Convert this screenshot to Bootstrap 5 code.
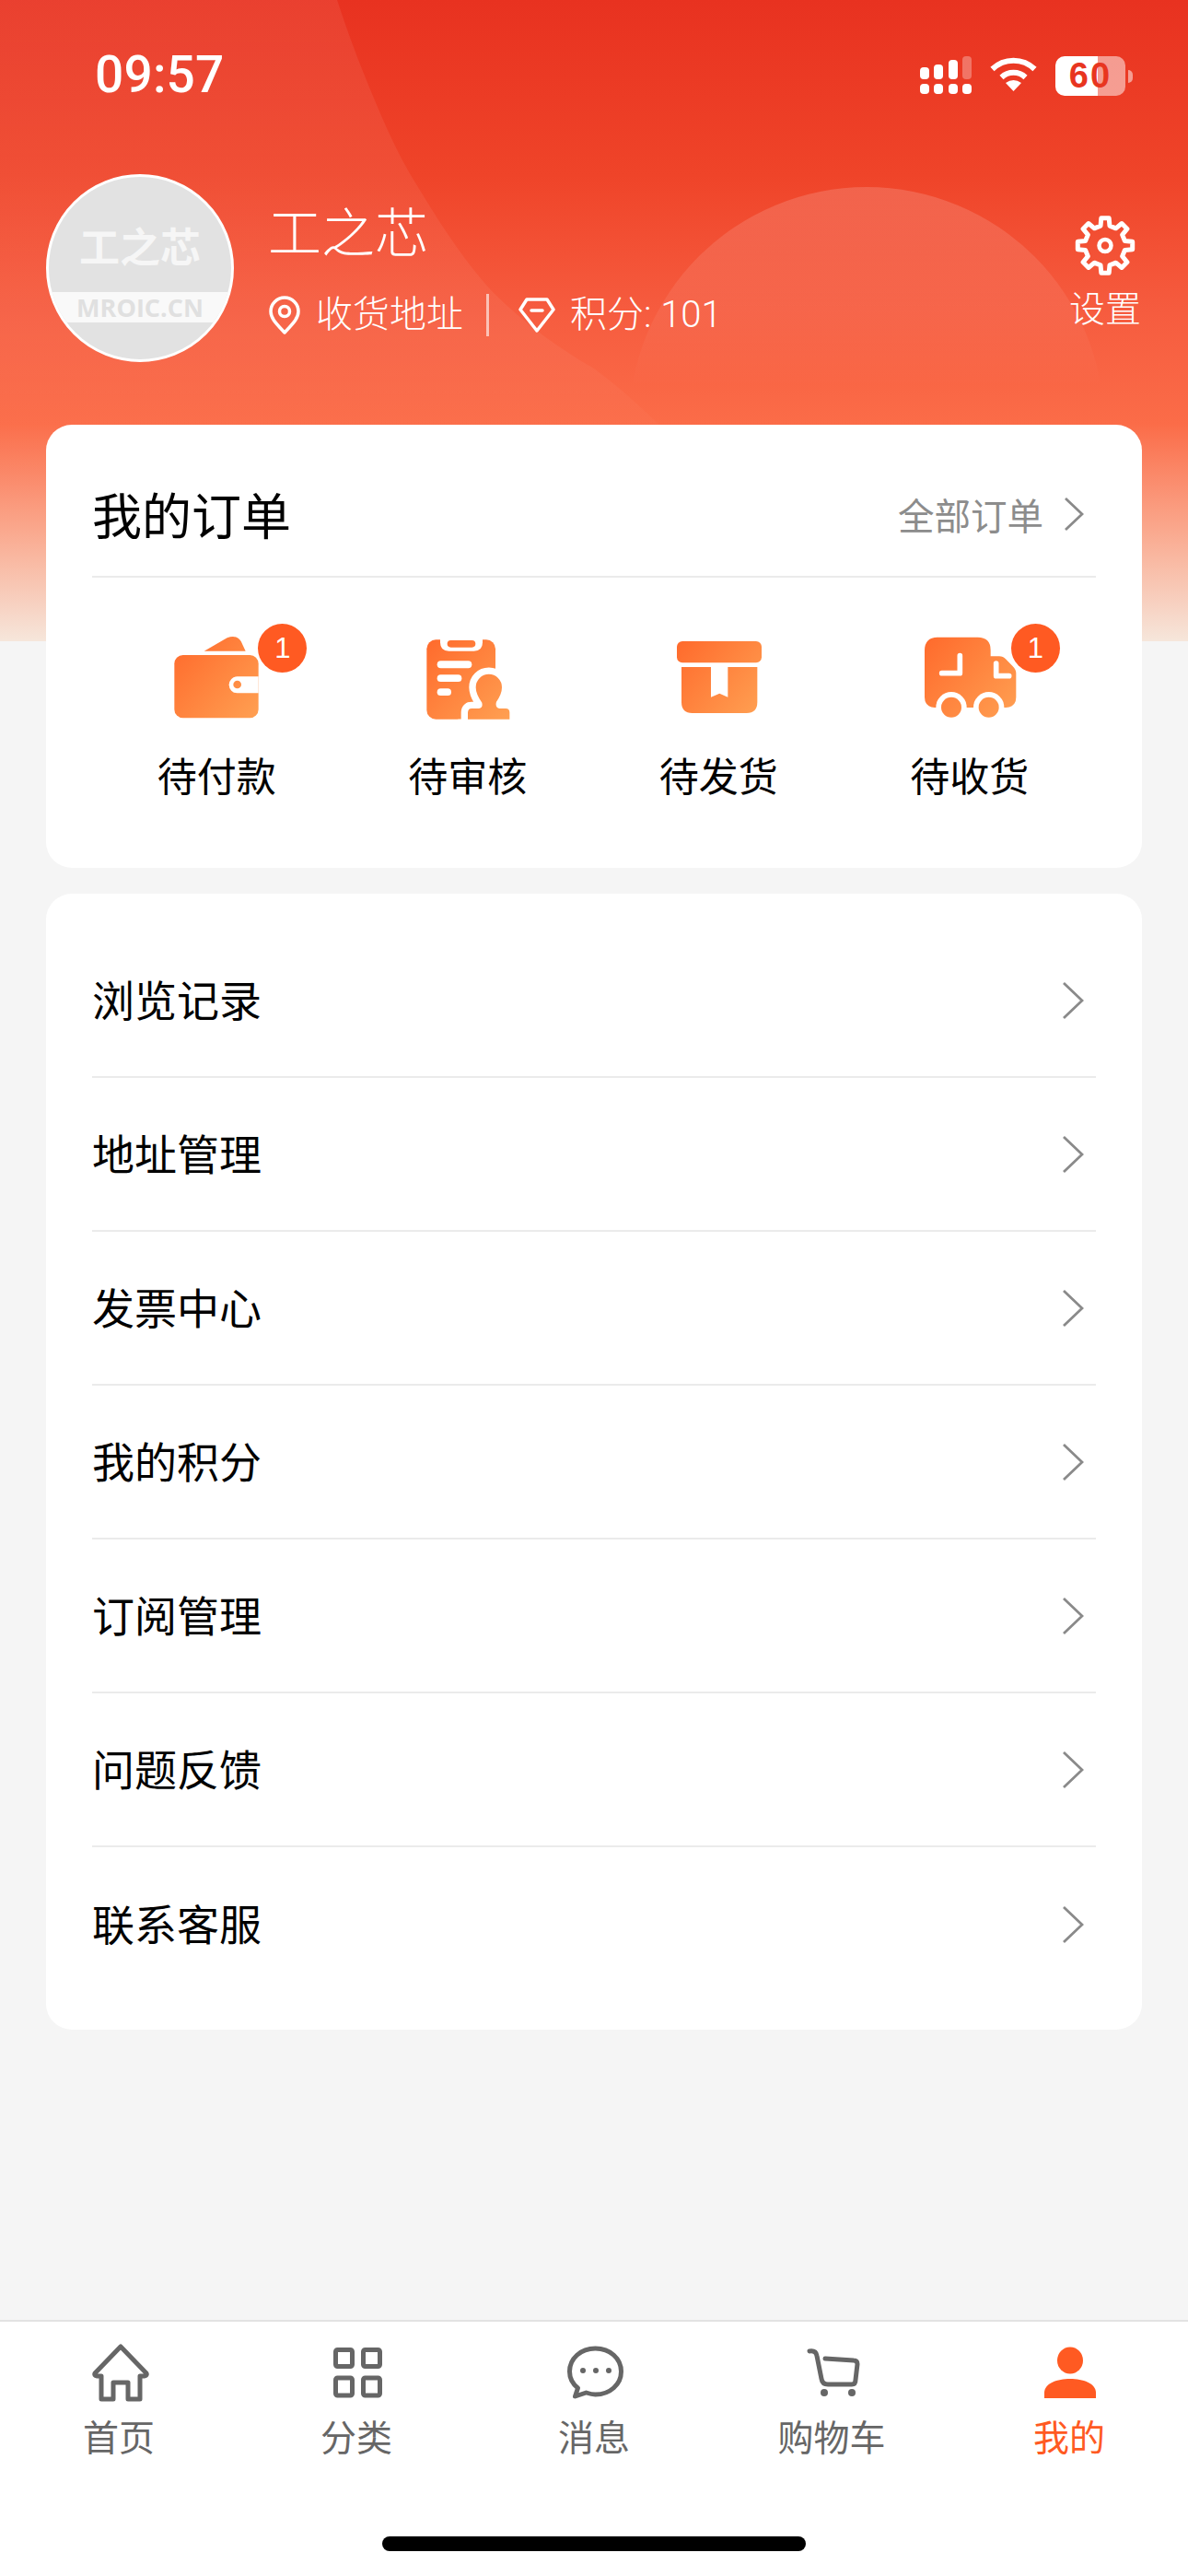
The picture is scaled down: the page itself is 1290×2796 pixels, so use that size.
<!DOCTYPE html>
<html lang="zh-CN">
<head>
<meta charset="utf-8">
<title>我的</title>
<link href="https://cdn.jsdelivr.net/npm/bootstrap@5.3.0/dist/css/bootstrap.min.css" rel="stylesheet">
<style>
html,body{margin:0;background:#f5f5f5}
body{font-family:"Noto Sans CJK SC","Liberation Sans",sans-serif;color:#000}
.screen{width:1290px;height:2796px;position:relative;overflow:hidden;background:#f5f5f5}
.hero-bg{position:absolute;left:0;top:0;width:1290px;height:696px;background:linear-gradient(180deg,#e83220 0,#ef4429 190px,#f65c3f 340px,#fb6c48 460px,#faa78c 573px,#f6e6db 696px)}
.hero-art{position:absolute;left:0;top:0}
.status-row{position:relative;height:105px;padding:60px 68px 0 103px}
.clock{font-family:Roboto,"Liberation Sans",sans-serif;font-weight:500;font-size:55px;line-height:43px;color:#fff;letter-spacing:.2px}
.status-icons{gap:19px;margin-top:1px}
.batt{position:relative;width:76px;height:43px;border-radius:10px;background:linear-gradient(90deg,#fff 0,#fff 46px,rgba(255,255,255,.5) 46px);font-family:"Liberation Sans",sans-serif;font-weight:700;font-size:38px;letter-spacing:2px;line-height:43px;text-align:center;color:#e8351f}
.batt::after{content:"";position:absolute;left:79px;top:15px;width:5px;height:14px;border-radius:0 5px 5px 0;background:rgba(255,255,255,.5)}
.profile{position:relative;margin:84px 52px 0 50px;height:204px;color:#fff}
.avatar-disc{width:204px;height:204px;border:3px solid #fff;background:#e2e2e2;flex:none;overflow:hidden;position:relative}
.avatar-big{font-weight:700;font-size:44px;line-height:50px;color:#f6f6f6;text-align:center;margin-top:49px}
.avatar-band{position:absolute;left:0;right:0;top:125px;height:33px;background:#f9f9f9;text-align:center;font-family:"Open Sans",sans-serif;font-weight:700;font-size:27px;line-height:33px;color:#e0e0e0}
.info{margin-left:37px;padding-top:25px}
.who{font-size:58px;line-height:70px;font-weight:300}
.meta{font-family:Roboto,"Noto Sans CJK SC",sans-serif;font-size:40px;line-height:46px;margin-top:35px;font-weight:300;color:#fff}
.pipe{width:3px;height:46px;background:rgba(255,255,255,.6);margin:0 32px 0 25px}
.setup{padding-top:44px;width:76px}
.setup span{font-size:39px;line-height:44px;margin-top:10px;white-space:nowrap;font-weight:300}
.panel.card{position:relative;border:0;border-radius:28px;margin-left:50px;margin-right:50px;background:#fff}
.panel.orders{margin-top:68px;height:481px;padding:0 50px}
.orders-head{height:166px;border-bottom:2px solid #ebebeb;padding-top:30px}
.orders-title{font-size:54px;line-height:70px}
.orders-all{font-size:39.500px;line-height:60px;color:#8c8c8c;padding-right:13px}
.orders-all svg{margin-left:22px}
.order-slot{flex:1 1 0;padding-top:61px}
.order-icon{position:relative;width:120px;height:96px}
.order-icon svg{display:block}
.dot-count{position:absolute;top:-11px;left:104px;width:53px;height:53px;background:#ff5a22;color:#fff;font-family:"Liberation Sans",sans-serif;font-size:31px;line-height:53px;text-align:center}
.order-name{font-size:43px;line-height:60px;margin-top:26px;margin-right:2px}
.panel.menu-list{margin-top:28px;height:1233px;padding:33px 50px}
.menu-list .list-group-item{height:167px;padding:0;border:0;border-bottom:2px solid #ebebeb;background:transparent;color:#000;font-size:46px}
.menu-list .list-group-item:last-child{border-bottom:0}
.menu-list svg{margin-right:13px}
.row-label{margin-bottom:5px}
.tabs{position:absolute;left:0;right:0;bottom:0;height:278px;background:#fff;border-top:2px solid #e3e3e3}
.tab-cell{flex:1 1 0;padding-top:24px;color:#666}
.tab-cell svg{display:block}
.tab-cell span{font-size:39px;line-height:38px;margin-top:17px;font-weight:400}
.tab-cell.on{color:#ff5a22}
.home-bar{position:absolute;left:415px;top:233px;width:460px;height:16px;border-radius:8px;background:#000}
.ink{fill:none;stroke:#666;stroke-width:5;stroke-linejoin:round;stroke-linecap:round}
</style>
</head>
<body>
<div class="screen">
  <div class="hero-bg">
    <svg class="hero-art" width="1290" height="696" viewBox="0 0 1290 696">
      <defs>
        <linearGradient id="sun" x1="0" y1="203" x2="0" y2="420" gradientUnits="userSpaceOnUse">
          <stop offset="0" stop-color="#fff" stop-opacity=".16"/>
          <stop offset="1" stop-color="#fff" stop-opacity="0"/>
        </linearGradient>
        <linearGradient id="veil" x1="0" y1="0" x2="0" y2="520" gradientUnits="userSpaceOnUse">
          <stop offset="0" stop-color="#fff" stop-opacity=".07"/>
          <stop offset=".7" stop-color="#fff" stop-opacity=".05"/>
          <stop offset="1" stop-color="#fff" stop-opacity="0"/>
        </linearGradient>
      </defs>
      <path d="M0 0H366C376 30 385 55 395 80C412 122 430 165 452 200C476 240 505 285 535 317C570 352 610 380 645 400C672 420 700 445 725 470L780 520H0Z" fill="url(#veil)"/>
      <circle cx="941" cy="461" r="258" fill="url(#sun)"/>
    </svg>
  </div>

  <div class="status-row d-flex justify-content-between align-items-start">
    <div class="clock">09:57</div>
    <div class="status-icons d-flex align-items-start">
      <svg width="56" height="41" viewBox="0 0 56 41" fill="#fff">
        <rect x="0" y="12" width="10" height="13" rx="4"/><rect x="15" y="9" width="10" height="16" rx="4"/><rect x="31" y="4" width="10" height="21" rx="4"/><rect x="46" y="0" width="10" height="25" rx="4" fill-opacity=".3"/>
        <rect x="0" y="30" width="10" height="11" rx="4"/><rect x="15" y="30" width="10" height="11" rx="4"/><rect x="31" y="30" width="10" height="11" rx="4"/><rect x="46" y="30" width="10" height="11" rx="4"/>
      </svg>
      <svg width="53" height="38" viewBox="0 0 53 38" fill="none" stroke="#fff" stroke-width="6">
        <path d="M3.500 14A33 33 0 0 1 49.500 14"/><path d="M13.500 23A19 19 0 0 1 39.500 23"/><path d="M26.500 38L18 29Q26.500 23 35 29Z" fill="#fff" stroke="none"/>
      </svg>
      <div class="batt">60</div>
    </div>
  </div>

  <div class="profile d-flex align-items-start">
    <div class="avatar-disc rounded-circle">
      <div class="avatar-big">工之芯</div>
      <div class="avatar-band">MROIC.CN</div>
    </div>
    <div class="info flex-grow-1">
      <div class="who">工之芯</div>
      <div class="meta d-flex align-items-center">
        <svg class="me-3" width="36" height="42" viewBox="0 0 36 42" fill="none" stroke="#fff" stroke-width="3.500">
          <path d="M18 40C12 33 3 26 3 17A15 15 0 0 1 33 17C33 26 24 33 18 40Z" stroke-linejoin="round"/><circle cx="18" cy="17" r="5.500"/>
        </svg>
        <span>收货地址</span>
        <i class="pipe d-block"></i>
        <svg class="me-3" width="40" height="38" viewBox="0 0 40 38" fill="none" stroke="#fff" stroke-width="3.500" stroke-linejoin="round">
          <path d="M9 2H31L38 13L20 36L2 13Z"/><path d="M14 14H26" stroke-linecap="round"/>
        </svg>
        <span>积分: 101</span>
      </div>
    </div>
    <div class="setup d-flex flex-column align-items-center">
      <svg width="66" height="67" viewBox="-33 -33.500 66 67" fill="none" stroke="#fff" stroke-width="5" stroke-linejoin="round">
        <polygon points="-4.950,-21.400 -4.200,-29.700 4.200,-29.700 4.950,-21.400 11.660,-18.660 18.050,-23.960 23.960,-18.050 18.660,-11.660 21.400,-4.950 29.700,-4.200 29.700,4.200 21.400,4.950 18.660,11.660 23.960,18.050 18.050,23.960 11.660,18.660 4.950,21.400 4.200,29.700 -4.200,29.700 -4.950,21.400 -11.660,18.660 -18.050,23.960 -23.960,18.050 -18.660,11.660 -21.400,4.950 -29.700,4.200 -29.700,-4.200 -21.400,-4.950 -18.660,-11.660 -23.960,-18.050 -18.050,-23.960 -11.660,-18.660"/>
        <circle r="6.500" stroke-width="4.500"/>
      </svg>
      <span>设置</span>
    </div>
  </div>

  <div class="panel card orders">
    <div class="orders-head d-flex justify-content-between align-items-center">
      <div class="orders-title">我的订单</div>
      <div class="orders-all d-flex align-items-center">全部订单
        <svg width="22" height="38" viewBox="0 0 22 38" fill="none" stroke="#8a8a8a" stroke-width="2.800"><path d="M2 2L20 19L2 36"/></svg>
      </div>
    </div>
    <div class="d-flex">
      <div class="order-slot d-flex flex-column align-items-center">
        <div class="order-icon">
          <svg width="120" height="96" viewBox="228 144 360 288">
            <defs><linearGradient id="g1" x1="268" y1="170" x2="542" y2="418" gradientUnits="userSpaceOnUse"><stop offset="0" stop-color="#ff6a2c"/><stop offset="1" stop-color="#ffa052"/></linearGradient></defs>
            <path d="M365 200L440 157Q470 145 485 168L500 200Z" fill="url(#g1)"/>
            <rect x="268" y="213" width="274" height="205" rx="28" fill="url(#g1)"/>
            <path d="M542 283H473A27 27 0 0 0 473 337H542Z" fill="#fff"/>
            <circle cx="473" cy="309" r="13" fill="url(#g1)"/>
          </svg>
          <div class="dot-count rounded-circle">1</div>
        </div>
        <div class="order-name">待付款</div>
      </div>
      <div class="order-slot d-flex flex-column align-items-center">
        <div class="order-icon">
          <svg width="120" height="96" viewBox="1045 144 360 288">
            <defs><linearGradient id="g2" x1="1088" y1="163" x2="1358" y2="422" gradientUnits="userSpaceOnUse"><stop offset="0" stop-color="#ff6a2c"/><stop offset="1" stop-color="#ffa052"/></linearGradient></defs>
            <rect x="1088" y="163" width="224" height="259" rx="30" fill="url(#g2)"/>
            <path d="M1132 160H1270V172Q1270 200 1242 200H1160Q1132 200 1132 172Z" fill="#fff"/>
            <rect x="1155" y="165" width="92" height="23" rx="11.500" fill="url(#g2)"/>
            <rect x="1122" y="232" width="113" height="24" rx="12" fill="#fff"/>
            <rect x="1122" y="277" width="80" height="23" rx="11.500" fill="#fff"/>
            <rect x="1122" y="322" width="46" height="23" rx="11.500" fill="#fff"/>
            <path d="M1222 400Q1222 387 1235 387H1258Q1272 385 1268 368Q1248 340 1248 318A42 42 0 0 1 1333 318Q1333 340 1315 365Q1310 385 1325 387H1345Q1358 387 1358 400V422H1222Z" fill="#fff" stroke="#fff" stroke-width="44" stroke-linejoin="round"/>
            <rect x="1313" y="250" width="67" height="190" fill="#fff"/>
            <rect x="1190" y="422" width="200" height="30" fill="#fff"/>
            <path d="M1222 400Q1222 387 1235 387H1258Q1272 385 1268 368Q1248 340 1248 318A42 42 0 0 1 1333 318Q1333 340 1315 365Q1310 385 1325 387H1345Q1358 387 1358 400V422H1222Z" fill="url(#g2)"/>
          </svg>
        </div>
        <div class="order-name">待审核</div>
      </div>
      <div class="order-slot d-flex flex-column align-items-center">
        <div class="order-icon">
          <svg width="120" height="96" viewBox="123 144 360 288">
            <defs><linearGradient id="g3" x1="165" y1="168" x2="441" y2="402" gradientUnits="userSpaceOnUse"><stop offset="0" stop-color="#ff6a2c"/><stop offset="1" stop-color="#ffa052"/></linearGradient></defs>
            <rect x="165" y="168" width="276" height="70" rx="18" fill="url(#g3)"/>
            <path d="M180 252H427V367Q427 402 392 402H215Q180 402 180 367Z" fill="url(#g3)"/>
            <path d="M276 252H331V350L304 338L276 350Z" fill="#fff"/>
          </svg>
        </div>
        <div class="order-name">待发货</div>
      </div>
      <div class="order-slot d-flex flex-column align-items-center">
        <div class="order-icon">
          <svg width="120" height="96" viewBox="942 144 360 288">
            <defs><linearGradient id="g4" x1="972" y1="155" x2="1270" y2="416" gradientUnits="userSpaceOnUse"><stop offset="0" stop-color="#ff6a2c"/><stop offset="1" stop-color="#ffa052"/></linearGradient></defs>
            <path d="M1015 155H1145Q1187 155 1187 197V217H1215Q1228 217 1236 226L1258 248Q1270 260 1270 272V350Q1270 382 1237 384H1005Q972 382 972 350V198Q972 155 1015 155Z" fill="url(#g4)"/>
            <circle cx="1059" cy="383" r="50" fill="#fff"/><circle cx="1181" cy="383" r="50" fill="#fff"/>
            <rect x="1000" y="384" width="240" height="50" fill="#fff"/>
            <circle cx="1059" cy="383" r="33" fill="url(#g4)"/><circle cx="1181" cy="383" r="33" fill="url(#g4)"/>
            <path d="M1087 215V272H1028M1205 240V281H1247" fill="none" stroke="#fff" stroke-width="17" stroke-linecap="round" stroke-linejoin="round"/>
          </svg>
          <div class="dot-count rounded-circle">1</div>
        </div>
        <div class="order-name">待收货</div>
      </div>
    </div>
  </div>

  <div class="panel card menu-list">
    <div class="list-group list-group-flush">
      <div class="list-group-item d-flex justify-content-between align-items-center"><span class="row-label">浏览记录</span><svg width="24" height="42" viewBox="0 0 24 42" fill="none" stroke="#8a8a8a" stroke-width="2.800"><path d="M2 2L22 21L2 40"/></svg></div>
      <div class="list-group-item d-flex justify-content-between align-items-center"><span class="row-label">地址管理</span><svg width="24" height="42" viewBox="0 0 24 42" fill="none" stroke="#8a8a8a" stroke-width="2.800"><path d="M2 2L22 21L2 40"/></svg></div>
      <div class="list-group-item d-flex justify-content-between align-items-center"><span class="row-label">发票中心</span><svg width="24" height="42" viewBox="0 0 24 42" fill="none" stroke="#8a8a8a" stroke-width="2.800"><path d="M2 2L22 21L2 40"/></svg></div>
      <div class="list-group-item d-flex justify-content-between align-items-center"><span class="row-label">我的积分</span><svg width="24" height="42" viewBox="0 0 24 42" fill="none" stroke="#8a8a8a" stroke-width="2.800"><path d="M2 2L22 21L2 40"/></svg></div>
      <div class="list-group-item d-flex justify-content-between align-items-center"><span class="row-label">订阅管理</span><svg width="24" height="42" viewBox="0 0 24 42" fill="none" stroke="#8a8a8a" stroke-width="2.800"><path d="M2 2L22 21L2 40"/></svg></div>
      <div class="list-group-item d-flex justify-content-between align-items-center"><span class="row-label">问题反馈</span><svg width="24" height="42" viewBox="0 0 24 42" fill="none" stroke="#8a8a8a" stroke-width="2.800"><path d="M2 2L22 21L2 40"/></svg></div>
      <div class="list-group-item d-flex justify-content-between align-items-center"><span class="row-label">联系客服</span><svg width="24" height="42" viewBox="0 0 24 42" fill="none" stroke="#8a8a8a" stroke-width="2.800"><path d="M2 2L22 21L2 40"/></svg></div>
    </div>
  </div>

  <div class="tabs d-flex">
    <div class="tab-cell d-flex flex-column align-items-center">
      <svg width="70" height="63" viewBox="0 0 70 63"><g transform="translate(6 0)"><path class="ink" d="M31 3L3 32Q2 34 5 35H10V60H23V42H39V60H52V35H57Q60 34 59 32Z"/></g></svg>
      <span>首页</span>
    </div>
    <div class="tab-cell d-flex flex-column align-items-center">
      <svg width="70" height="63" viewBox="0 0 70 63"><rect class="ink" x="12.500" y="6.500" width="18" height="18" rx="2"/><rect class="ink" x="42.500" y="6.500" width="18" height="18" rx="2"/><rect class="ink" x="12.500" y="37" width="18" height="19" rx="2"/><rect class="ink" x="42.500" y="37" width="18" height="19" rx="2"/></svg>
      <span>分类</span>
    </div>
    <div class="tab-cell d-flex flex-column align-items-center">
      <svg width="70" height="63" viewBox="0 0 70 63"><g transform="translate(5.500 3)"><path class="ink" d="M31 2C15 2 3 13 3 27C3 35 7 41 12 45L9 54L21 50C24 51 28 52 31 52C47 52 59 41 59 27C59 13 47 2 31 2Z"/></g><circle cx="23" cy="29" r="3" fill="#666"/><circle cx="37" cy="29" r="3" fill="#666"/><circle cx="51" cy="29" r="3" fill="#666"/></svg>
      <span>消息</span>
    </div>
    <div class="tab-cell d-flex flex-column align-items-center">
      <svg width="70" height="63" viewBox="0 0 70 63"><g transform="translate(9 5)"><path class="ink" d="M2 3Q9 2 10 8L15 33Q16 39 22 39H48Q52 39 52 34L54 17Q54 13 50 13L19 11"/><circle cx="18" cy="48" r="4" fill="#666"/><circle cx="48" cy="48" r="4" fill="#666"/></g></svg>
      <span>购物车</span>
    </div>
    <div class="tab-cell on d-flex flex-column align-items-center">
      <svg width="70" height="63" viewBox="0 0 70 63" fill="#ff5a22"><ellipse cx="36" cy="18" rx="14" ry="14.500"/><path d="M8 59V53C8 43 22 38 36 38C50 38 64 43 64 53V59Z"/></svg>
      <span>我的</span>
    </div>
    <div class="home-bar"></div>
  </div>
</div>
<script src="https://cdn.jsdelivr.net/npm/bootstrap@5.3.0/dist/js/bootstrap.bundle.min.js"></script>
</body>
</html>
